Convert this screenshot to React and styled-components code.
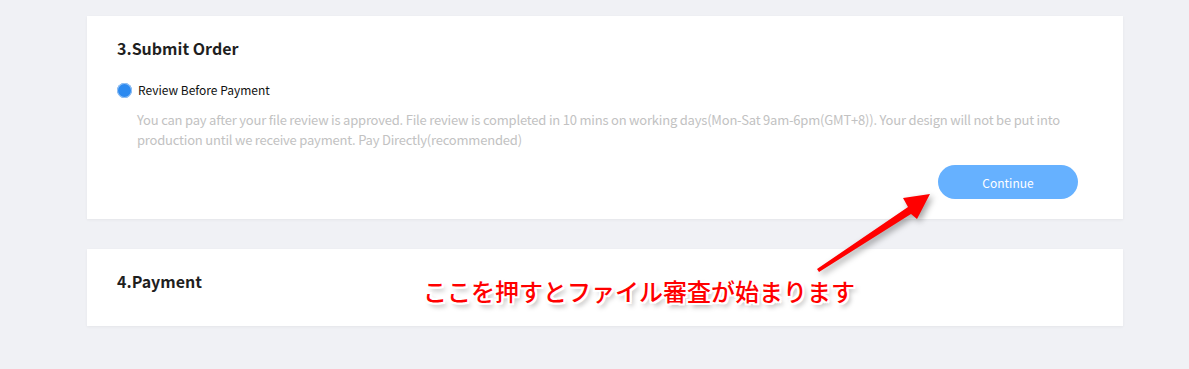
import React from "react"
import styled, { createGlobalStyle } from "styled-components"

const GlobalStyle = createGlobalStyle`
  html, body {
    margin: 0;
    padding: 0;
    background: #f0f1f5;
  }
  body {
    font-family: "Noto Sans CJK JP", "Noto Sans", sans-serif;
  }
`

const Page = styled.div`
  position: relative;
  width: 1189px;
  height: 369px;
  padding: 16px 0 0 87px;
  box-sizing: border-box;
  display: flex;
  flex-direction: column;
  gap: 30px;
`

const Card = styled.section`
  width: 1036px;
  box-sizing: border-box;
  background: #fff;
  box-shadow: 0 1px 3px rgba(0, 0, 0, 0.05);
  padding: ${p => p.$padding || "21px 45px 19px 30px"};
  display: flex;
  flex-direction: column;
  min-height: ${p => p.$minHeight || "auto"};
`

const Title = styled.h2`
  margin: 0;
  font-size: 16px;
  line-height: 22px;
  font-weight: 700;
  color: #1f1f1f;
`

const RadioRow = styled.label`
  display: flex;
  align-items: center;
  gap: 6px;
  margin-top: 22px;
  font-size: 12px;
  line-height: 18px;
  color: #111;
`

const RadioDot = styled.span`
  width: 15px;
  height: 15px;
  border-radius: 50%;
  background: #2c8af0;
  box-shadow: 0 0 0 1px #9bc4f2 inset;
  flex-shrink: 0;
`

const Desc = styled.p`
  margin: 11px 0 0 20px;
  font-size: 13px;
  line-height: 20px;
  letter-spacing: -0.2px;
  color: #c2c2c2;
  max-width: 941px;
`

const Actions = styled.div`
  display: flex;
  justify-content: flex-end;
  margin-top: 15px;
`

const Button = styled.button`
  width: 140px;
  height: 34px;
  border: none;
  border-radius: 17px;
  background: #66b1ff;
  color: #fff;
  font-family: inherit;
  font-size: 12px;
`

const Note = styled.div`
  position: absolute;
  left: 423px;
  top: 274px;
  font-size: 24px;
  line-height: 34px;
  font-weight: 500;
  color: #ff0000;
  text-shadow:
    -2px -2px 0 #fff, 2px -2px 0 #fff, -2px 2px 0 #fff, 2px 2px 0 #fff,
    0 -2px 0 #fff, 0 2px 0 #fff, -2px 0 0 #fff, 2px 0 0 #fff,
    3px 4px 5px rgba(0, 0, 0, 0.35);
`

const Arrow = styled.svg`
  position: absolute;
  left: 800px;
  top: 180px;
  overflow: visible;
  filter: drop-shadow(3px 3px 3px rgba(0, 0, 0, 0.35));
`

export default function App() {
  return (
    <>
      <GlobalStyle />
      <Page>
        <Card $padding="21px 45px 20px 30px">
          <Title>3.Submit Order</Title>
          <RadioRow>
            <RadioDot />
            Review Before Payment
          </RadioRow>
          <Desc>
            You can pay after your file review is approved. File review is completed in 10 mins on working days(Mon-Sat 9am-6pm(GMT+8)). Your design will not be put into production until we receive payment. Pay Directly(recommended)
          </Desc>
          <Actions>
            <Button>Continue</Button>
          </Actions>
        </Card>
        <Card $padding="21px 30px" $minHeight="77px">
          <Title>4.Payment</Title>
        </Card>
      </Page>
      <Arrow width="150" height="100" viewBox="0 0 150 100">
        <path d="M17 89 L19 92 L111 34 L117 39 L130 14 L103 18 L108 27 Z" fill="#ff0000" />
      </Arrow>
      <Note>ここを押すとファイル審査が始まります</Note>
    </>
  )
}
